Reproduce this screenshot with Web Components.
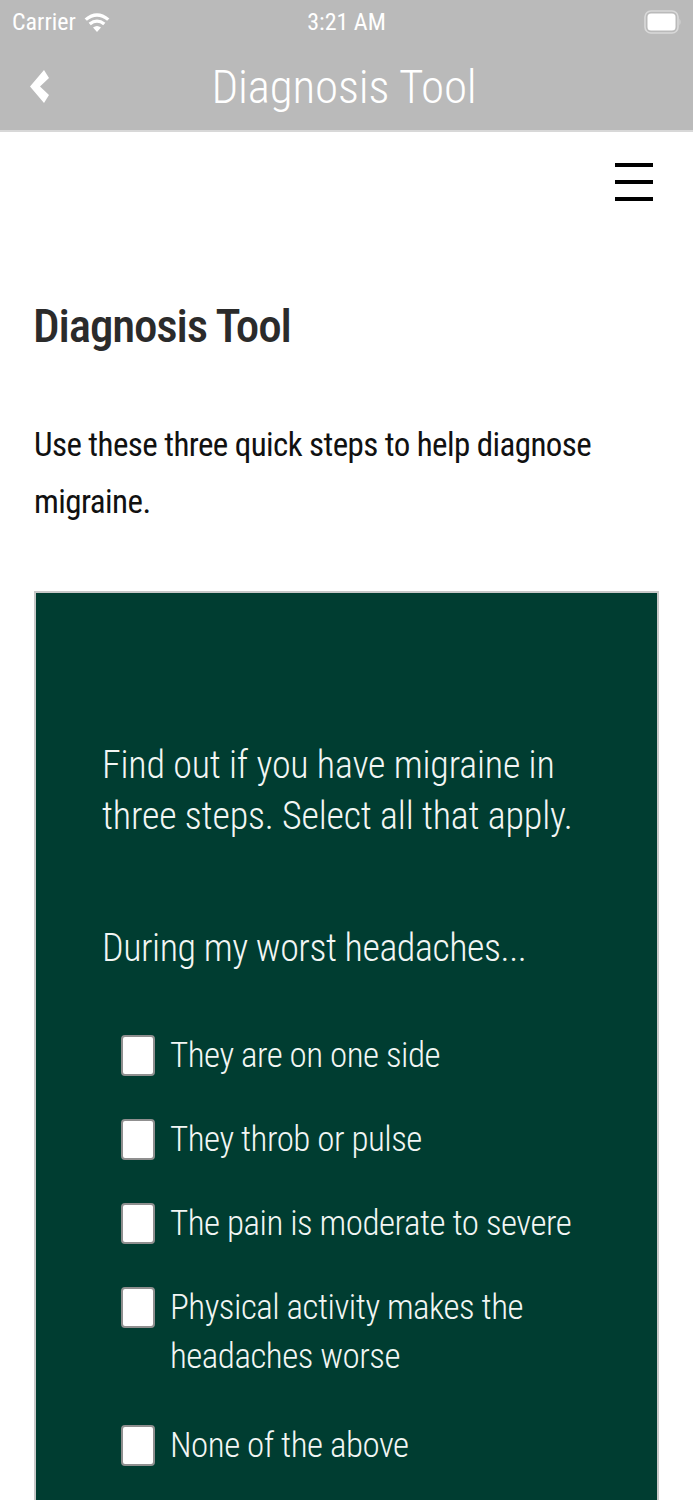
<!DOCTYPE html>
<html>
<head>
<meta charset="utf-8">
<style>
	html, body { margin: 0; padding: 0; background: #fff; }
	body { font-family: Roboto, "Liberation Sans", sans-serif; font-stretch: 81%; height: 1500px; overflow: hidden; }
</style>
</head>
<body>
<app-header title="Diagnosis Tool"></app-header>
<main-page>
	<h-title>Diagnosis Tool</h-title>
	<intro-text>Use these three quick steps to help diagnose migraine.</intro-text>
	<quiz-card>
		<span slot="lead">Find out if you have migraine in three steps. Select all that apply.</span>
		<span slot="question">During my worst headaches...</span>
		<check-item>They are on one side</check-item>
		<check-item>They throb or pulse</check-item>
		<check-item>The pain is moderate to severe</check-item>
		<check-item wrapped>Physical activity makes the headaches worse</check-item>
		<check-item>None of the above</check-item>
	</quiz-card>
</main-page>
<script>
function define(name, html) {
	customElements.define(name, class extends HTMLElement {
		constructor() {
			super();
			this.attachShadow({ mode: 'open' }).innerHTML = html;
		}
	});
}

customElements.define('app-header', class extends HTMLElement {
	constructor() {
		super();
		const s = this.attachShadow({ mode: 'open' });
		s.innerHTML = `
			<style>
				:host { display: block; background: #bababa; color: #fff; border-bottom: 2px solid #d8d8d8; }
				.status { height: 43px; display: grid; grid-template-columns: 1fr auto 1fr; align-items: center; padding: 0 12px; font-size: 24px; }
				.left { display: flex; align-items: center; gap: 8px; }
				.right { justify-self: end; margin-right: -1px; }
				.nav { height: 87px; display: grid; grid-template-columns: 1fr auto 1fr; align-items: center; padding: 0 30px; }
				.title { font-size: 47px; font-weight: 300; padding-right: 5px; letter-spacing: -0.15px; }
				svg { display: block; }
			</style>
			<div class="status">
				<div class="left">Carrier
					<svg width="26" height="22" viewBox="0 0 26 22"><path d="M13 21 L9 16.5 Q13 13.5 17 16.5Z M6.8 14.2 L4.6 11.8 Q13 5 21.4 11.8 L19.2 14.2 Q13 9.4 6.8 14.2Z M2.9 9.8 L.6 7.4 Q13 -3 25.4 7.4 L23.1 9.8 Q13 1.6 2.9 9.8Z" fill="#fff"/></svg>
				</div>
				<div>3:21 AM</div>
				<div class="right">
					<svg width="38" height="24" viewBox="0 0 38 24"><rect x="1" y="1" width="33" height="22" rx="6" fill="none" stroke="#d9d9d9" stroke-width="1.6"/><rect x="3.5" y="3.5" width="28" height="17" rx="3.5" fill="#fff"/><path d="M35.5 8.5 Q37.5 12 35.5 15.5Z" fill="#d9d9d9"/></svg>
				</div>
			</div>
			<div class="nav">
				<svg width="20" height="33" viewBox="0 0 20 33"><path d="M14 0 L19 8 L10 16.5 L19 25 L14 33 L0 16.5Z" fill="#fff"/></svg>
				<div class="title"></div>
				<div></div>
			</div>`;
		s.querySelector('.title').textContent = this.getAttribute('title');
	}
});

define('main-page', `
	<style>
		:host { display: block; padding: 31px 34px 0; }
		.menu { display: flex; flex-direction: column; gap: 13px; width: 38px; margin-left: auto; margin-right: 6px; }
		.menu i { display: block; height: 4px; background: #000; }
	</style>
	<div class="menu"><i></i><i></i><i></i></div>
	<slot></slot>`);

define('h-title', `
	<style>
		:host { display: block; margin: 92px 0 0 -1px; font-size: 47px; line-height: 66px; font-weight: 550; color: #2b2b2b; letter-spacing: -1.15px; }
	</style>
	<slot></slot>`);

define('intro-text', `
	<style>
		:host { display: block; margin-top: 57px; font-size: 33px; line-height: 57px; font-weight: 380; color: #111; letter-spacing: -0.57px; width: 600px; }
	</style>
	<slot></slot>`);

define('quiz-card', `
	<style>
		:host { display: block; margin-top: 61px; width: 621px; height: 920px; background: #003d31; border: 2px solid #c8c8c8; border-bottom: 0; color: #f2f6f4; font-weight: 300; }
		.inner { padding: 147px 60px 0 66px; }
		.lead { font-size: 38px; line-height: 51px; letter-spacing: -0.18px; }
		.q { font-size: 38px; line-height: 51px; margin-top: 81px; letter-spacing: -0.45px; }
		.list { margin-top: 57px; padding-left: 19px; display: flex; flex-direction: column; gap: 35px; letter-spacing: -0.5px; }
	</style>
	<div class="inner">
		<div class="lead"><slot name="lead"></slot></div>
		<div class="q"><slot name="question"></slot></div>
		<div class="list"><slot></slot></div>
	</div>`);

define('check-item', `
	<style>
		:host { display: flex; gap: 15px; align-items: flex-start; font-size: 35px; line-height: 49px; }
		:host([wrapped]) { padding-bottom: 5px; }
		.box { flex: none; width: 34px; height: 41px; box-sizing: border-box; background: #fff; border: 2px solid #8f8f8f; border-radius: 4px; margin-top: 4px; }
	</style>
	<div class="box"></div>
	<div><slot></slot></div>`);
</script>
</body>
</html>
